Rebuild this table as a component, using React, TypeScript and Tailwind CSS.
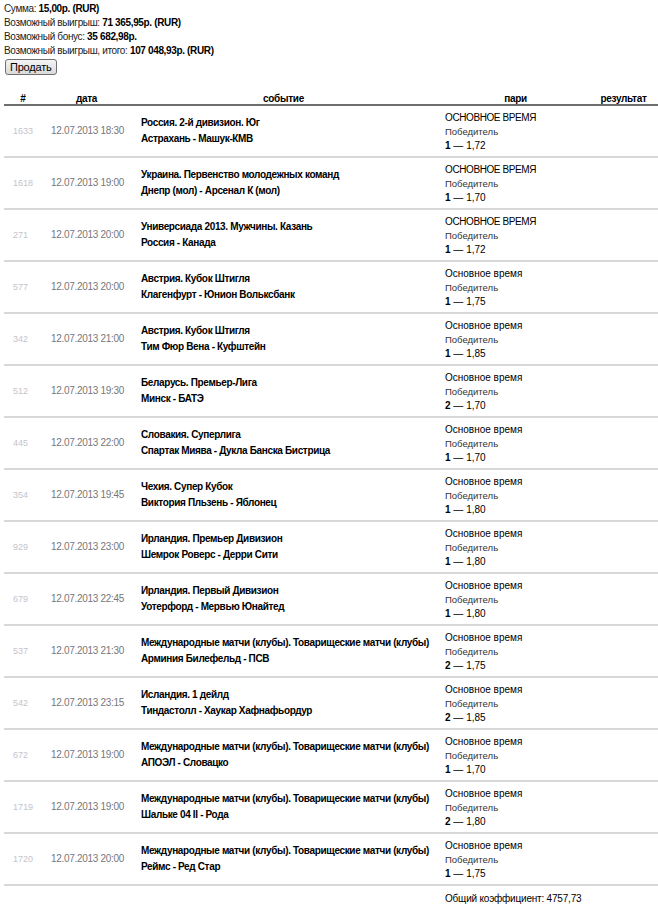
import React from "react";

type Row = { id: string; time: string; league: string; match: string; upper?: boolean; out: string; k: string };

const rows: Row[] = [
  { id: "1633", time: "18:30", league: "Россия. 2-й дивизион. Юг", match: "Астрахань - Машук-КМВ", upper: true, out: "1", k: "1,72" },
  { id: "1618", time: "19:00", league: "Украина. Первенство молодежных команд", match: "Днепр (мол) - Арсенал К (мол)", upper: true, out: "1", k: "1,70" },
  { id: "271", time: "20:00", league: "Универсиада 2013. Мужчины. Казань", match: "Россия - Канада", upper: true, out: "1", k: "1,72" },
  { id: "577", time: "20:00", league: "Австрия. Кубок Штигля", match: "Клагенфурт - Юнион Вольксбанк", out: "1", k: "1,75" },
  { id: "342", time: "21:00", league: "Австрия. Кубок Штигля", match: "Тим Фюр Вена - Куфштейн", out: "1", k: "1,85" },
  { id: "512", time: "19:30", league: "Беларусь. Премьер-Лига", match: "Минск - БАТЭ", out: "2", k: "1,70" },
  { id: "445", time: "22:00", league: "Словакия. Суперлига", match: "Спартак Миява - Дукла Банска Бистрица", out: "1", k: "1,70" },
  { id: "354", time: "19:45", league: "Чехия. Супер Кубок", match: "Виктория Пльзень - Яблонец", out: "1", k: "1,80" },
  { id: "929", time: "23:00", league: "Ирландия. Премьер Дивизион", match: "Шемрок Роверс - Дерри Сити", out: "1", k: "1,80" },
  { id: "679", time: "22:45", league: "Ирландия. Первый Дивизион", match: "Уотерфорд - Мервью Юнайтед", out: "1", k: "1,80" },
  { id: "537", time: "21:30", league: "Международные матчи (клубы). Товарищеские матчи (клубы)", match: "Арминия Билефельд - ПСВ", out: "2", k: "1,75" },
  { id: "542", time: "23:15", league: "Исландия. 1 дейлд", match: "Тиндастолл - Хаукар Хафнафьордур", out: "2", k: "1,85" },
  { id: "672", time: "19:00", league: "Международные матчи (клубы). Товарищеские матчи (клубы)", match: "АПОЭЛ - Словацко", out: "1", k: "1,70" },
  { id: "1719", time: "19:00", league: "Международные матчи (клубы). Товарищеские матчи (клубы)", match: "Шальке 04 II - Рода", out: "2", k: "1,80" },
  { id: "1720", time: "20:00", league: "Международные матчи (клубы). Товарищеские матчи (клубы)", match: "Реймс - Ред Стар", out: "1", k: "1,75" },
];

export default function App() {
  return (
    <div className="w-[658px] bg-white px-[4px] pt-[2px] text-[10px] leading-[14px] text-black" style={{ fontFamily: '"Liberation Sans", Arial, sans-serif' }}>
      <div className="tracking-[-0.35px] text-[#222]">
        <div>Сумма: <b className="text-black">15,00р. (RUR)</b></div>
        <div>Возможный выигрыш: <b className="text-black">71 365,95р. (RUR)</b></div>
        <div>Возможный бонус: <b className="text-black">35 682,98р.</b></div>
        <div>Возможный выигрыш, итого: <b className="text-black">107 048,93р. (RUR)</b></div>
      </div>
      <button className="mt-[1px] ml-[1px] h-[16px] rounded-[3px] border border-[#707070] bg-gradient-to-b from-[#f4f4f4] to-[#dadada] px-[4px] text-[11px] leading-[13px] tracking-[-0.2px] text-black">
        Продать
      </button>
      <table className="mt-[14px] w-[654px] table-fixed border-collapse">
        <colgroup>
          <col className="w-[38px]" />
          <col className="w-[89px]" />
          <col className="w-[305px]" />
          <col className="w-[159px]" />
          <col className="w-[63px]" />
        </colgroup>
        <thead>
          <tr className="border-b-2 border-[#6e6e6e] leading-[11px] tracking-[-0.3px]">
            <th className="h-[15px] p-0 pt-[4px] text-center font-bold">#</th>
            <th className="p-0 pt-[4px] text-center font-bold">дата</th>
            <th className="p-0 pt-[4px] text-center font-bold">событие</th>
            <th className="p-0 pt-[4px] text-center font-bold">пари</th>
            <th className="p-0 pt-[4px] pr-[6px] text-center font-bold">результат</th>
          </tr>
        </thead>
        <tbody>
          {rows.map((r) => (
            <tr key={r.id} className="h-[52px] border-b-2 border-[#d8d8d8]">
              <td className="whitespace-nowrap p-0 pl-[9px] align-middle text-[9px] text-[#c4c4cc]">{r.id}</td>
              <td className="whitespace-nowrap p-0 pl-[9px] align-middle text-[10px] tracking-[-0.3px] text-[#777]">12.07.2013 {r.time}</td>
              <td className="whitespace-nowrap p-0 pl-[10px] align-middle font-bold leading-[16px] tracking-[-0.35px]">
                <div>{r.league}</div>
                <div>{r.match}</div>
              </td>
              <td className="whitespace-nowrap p-0 pl-[9px] pt-[1px] align-middle">
                <div className={r.upper ? "tracking-[-0.4px]" : ""}>{r.upper ? "ОСНОВНОЕ ВРЕМЯ" : "Основное время"}</div>
                <div className="text-[9.5px] text-[#333]">Победитель</div>
                <div><b>{r.out}</b> — {r.k}</div>
              </td>
              <td className="p-0"></td>
            </tr>
          ))}
          <tr>
            <td colSpan={3} className="p-0"></td>
            <td colSpan={2} className="whitespace-nowrap p-0 pl-[9px] pt-[6px] pb-[4px] tracking-[-0.2px]">
              Общий коэффициент: 4757,73
            </td>
          </tr>
        </tbody>
      </table>
    </div>
  );
}
